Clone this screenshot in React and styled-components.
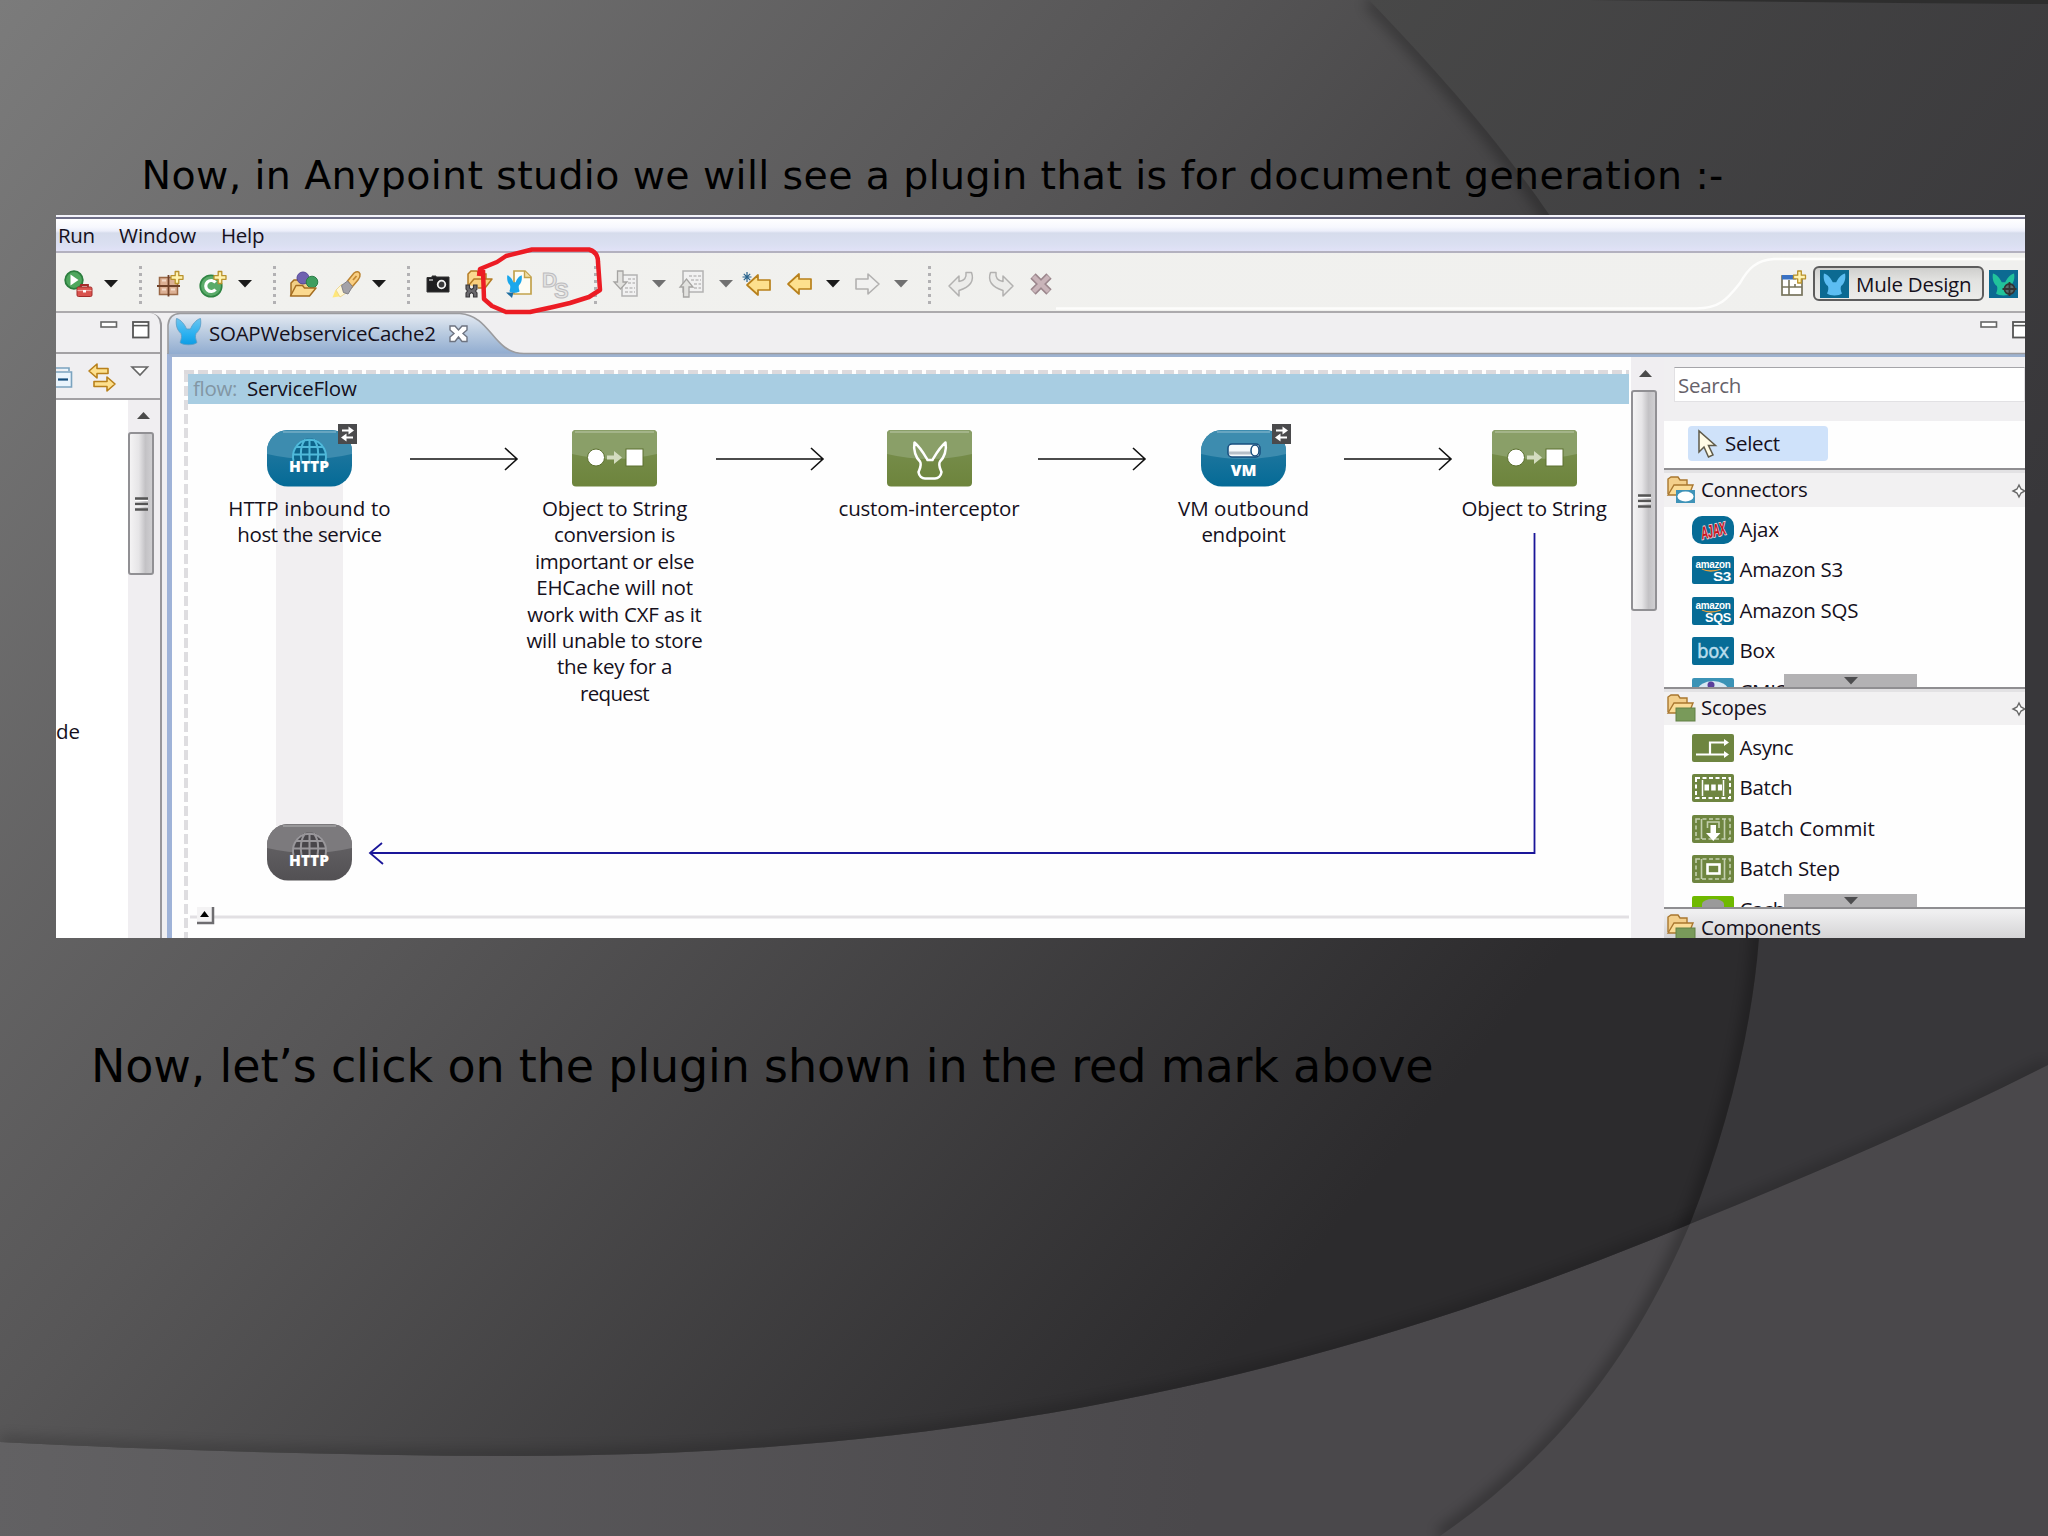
import React from 'react';
import styled, { createGlobalStyle } from 'styled-components';

const Global = createGlobalStyle`
  * { box-sizing: border-box; }
  html, body { margin: 0; padding: 0; background: #4a484b; }
  svg { display: block; overflow: visible; flex: none; }
`;

/* ---------- slide ---------- */
const Slide = styled.main`
  position: relative;
  width: 2048px;
  height: 1536px;
  overflow: hidden;
  display: flex;
  flex-direction: column;
  align-items: flex-start;
  font-family: "Open Sans", "Noto Sans", sans-serif;
  font-size: 20.5px;
  color: #15101c;
`;
const Backdrop = styled.svg`
  position: absolute;
  inset: 0;
`;
const Heading = styled.p`
  position: relative;
  margin: ${p => p.$top}px 0 0 ${p => p.$left}px;
  height: ${p => p.$h}px;
  line-height: 60px;
  font-family: "DejaVu Sans", sans-serif;
  font-size: ${p => p.$size}px;
  letter-spacing: ${p => p.$ls}px;
  white-space: nowrap;
  color: #000;
`;
const Window = styled.section`
  position: relative;
  margin-left: 56px;
  width: 1969px;
  height: 723px;
  display: flex;
  flex-direction: column;
  background: #f0eff1;
`;

/* ---------- menu and toolbar ---------- */
const MenuBar = styled.nav`
  height: 38px;
  padding: 2px 0 0 2px;
  display: flex;
  border-top: 2px solid #f4f4fb;
  border-bottom: 2px solid #b3b1bf;
  background: linear-gradient(#6f6f88 0 2px, #fff 2px, #f7f8fe 10px, #eceefa 14px, #d6dcec 16px, #dadff1 27px, #e1e2f7 34px);
`;
const MenuItem = styled.span`
  width: ${p => p.$w}px;
  line-height: 33px;
  letter-spacing: ${p => p.$ls}px;
  white-space: nowrap;
`;
const Toolbar = styled.div`
  position: relative;
  height: 60px;
  padding-top: 13px;
  display: flex;
  align-items: flex-start;
  border-bottom: 2px solid #acaaad;
  background: linear-gradient(90deg, #f1f1ee, #f0f0ee);
`;
const Tool = styled.span`
  width: ${p => p.$w || 28}px;
  margin-left: ${p => p.$l}px;
  height: 36px;
  display: flex;
  align-items: center;
  flex: none;
`;
const PinSlot = styled.span`
  width: 12px;
  margin: 9px 0 0 5px;
`;
const Dots = styled.span`
  width: 3px;
  height: 38px;
  margin-left: ${p => p.$l}px;
  flex: none;
  background: repeating-linear-gradient(#b2b1b3 0 3px, transparent 3px 7px);
`;
const PerspectiveEdge = styled.svg`
  position: absolute;
  left: 1000px;
  top: 0;
`;
const PerspectiveButton = styled.button`
  position: relative;
  margin-left: 6px;
  width: 171px;
  height: 35px;
  padding: 0 0 0 5px;
  display: flex;
  align-items: center;
  gap: 7px;
  border: 2px solid #5d5d5d;
  border-radius: 6px;
  background: linear-gradient(#cfcfcd, #e2e2e0 40%, #ececea);
  font: inherit;
  color: inherit;
  line-height: 30px;
  letter-spacing: ${p => p.$ls}px;
  white-space: nowrap;
`;
const RedMark = styled.svg`
  position: absolute;
  left: 0;
  top: 0;
  pointer-events: none;
`;

/* ---------- body ---------- */
const Body = styled.div`
  flex: 1;
  min-height: 0;
  display: flex;
`;
const SidePane = styled.aside`
  width: 106px;
  display: flex;
  flex-direction: column;
  border-right: 2px solid #97969a;
  border-top-right-radius: 12px;
`;
const SideHead = styled.div`
  height: 41px;
  padding: 8px 0 0 44px;
  display: flex;
  align-items: flex-start;
  gap: 14px;
  border-bottom: 2px solid #a3a1a4;
`;
const SideTools = styled.div`
  height: 46px;
  padding-top: 6px;
  display: flex;
  align-items: flex-start;
  border-bottom: 2px solid #a3a1a4;
`;
const SideBody = styled.div`
  flex: 1;
  display: flex;
  background: #fff;
`;
const SideText = styled.div`
  width: 72px;
  padding: 316px 0 0 0;
  line-height: 30px;
`;
const Track = styled.div`
  width: ${p => p.$w}px;
  padding-top: ${p => p.$top}px;
  display: flex;
  flex-direction: column;
  align-items: flex-start;
  background: #f0eef1;
`;
const Thumb = styled.div`
  margin-top: ${p => p.$gap}px;
  width: ${p => p.$w || 26}px;
  height: ${p => p.$h}px;
  display: flex;
  align-items: center;
  justify-content: center;
  border: 2px solid #919094;
  border-radius: 3px;
  background: linear-gradient(90deg, #f4f3f4, #e6e5e7 40%, #c3c2c5 70%, #cfced1);
`;
const Editor = styled.section`
  margin-left: 5px;
  flex: 1;
  min-width: 0;
  display: flex;
  flex-direction: column;
`;
const TabRow = styled.div`
  position: relative;
  height: 40px;
  display: flex;
  justify-content: space-between;
`;
const TabShape = styled.svg`
  position: absolute;
  left: 0;
  top: 0;
`;
const Tab = styled.div`
  position: relative;
  width: 340px;
  padding: 5px 0 0 9px;
  display: flex;
  align-items: flex-start;
`;
const TabTitle = styled.span`
  width: 240px;
  margin-left: 8px;
  line-height: 31px;
  letter-spacing: ${p => p.$ls}px;
  white-space: nowrap;
`;
const TabClose = styled.span`
  margin-top: 7px;
`;
const TabControls = styled.div`
  width: 45px;
  padding-top: 8px;
  display: flex;
  gap: 14px;
  overflow: hidden;
  align-items: flex-start;
`;
const EditorBody = styled.div`
  flex: 1;
  min-height: 0;
  display: flex;
  border-left: 5px solid #9fb3d8;
  border-top: 4px solid #9db2d0;
`;

/* ---------- flow canvas ---------- */
const Canvas = styled.div`
  position: relative;
  width: 1459px;
  padding: 17px 2px 0 16px;
  background: #fefefe;
`;
const FlowTitle = styled.div`
  height: 30px;
  padding-left: 5px;
  display: flex;
  gap: 9px;
  line-height: 29px;
  background: #a8cde2;
  white-space: nowrap;
`;
const FlowKind = styled.span`
  width: 45px;
  color: #8296a4;
  letter-spacing: ${p => p.$ls}px;
`;
const FlowName = styled.span`
  letter-spacing: ${p => p.$ls}px;
`;
const Wires = styled.svg`
  position: absolute;
  left: 0;
  top: 0;
`;
const Node = styled.div`
  position: absolute;
  left: ${p => p.$cx - 172 - 110}px;
  top: ${p => p.$y - 357}px;
  width: 220px;
  display: flex;
  flex-direction: column;
  align-items: center;
`;
const NodeText = styled.div`
  margin-top: 8px;
  display: flex;
  flex-direction: column;
  align-items: center;
  line-height: 26.4px;
  white-space: nowrap;
`;
const NodeLine = styled.span`
  letter-spacing: ${p => p.$ls}px;
`;

/* ---------- palette ---------- */
const Palette = styled.aside`
  width: 361px;
  display: flex;
  flex-direction: column;
  overflow: hidden;
  background: #fefefe;
`;
const SearchArea = styled.div`
  height: 64px;
  padding: 10px 0 0 10px;
  background: #f0eff1;
`;
const SearchField = styled.div`
  height: 35px;
  padding-left: 3px;
  line-height: 35px;
  border: 1px solid #e2e1e4;
  border-top-color: #a5a5a9;
  background: #fff;
  color: #66626a;
  letter-spacing: -0.3px;
`;
const SelectRow = styled.div`
  height: 47px;
  padding: 5px 0 0 24px;
`;
const SelectTool = styled.div`
  width: 140px;
  height: 35px;
  padding-left: 10px;
  display: flex;
  align-items: center;
  gap: 7px;
  border-radius: 4px;
  background: #cfe2fa;
  line-height: 33px;
  letter-spacing: -0.3px;
`;
const Drawer = styled.section`
  position: relative;
  height: ${p => p.$h}px;
  overflow: hidden;
  border-top: 2px solid #8f8e91;
`;
const DrawerHead = styled.header`
  height: ${p => p.$h}px;
  padding: ${p => p.$pt}px 0 0 3px;
  display: flex;
  align-items: flex-start;
  border-top: 3px solid ${p => p.$plain ? '#efeff0' : '#e3e2e4'};
  background: ${p => p.$plain ? 'linear-gradient(#efeff0, #d3d2d4)' : '#f2f1f2'};
`;
const DrawerName = styled.span`
  width: 308px;
  margin-left: 5px;
  line-height: 27px;
  letter-spacing: ${p => p.$ls}px;
`;
const Entry = styled.div`
  height: 40.4px;
  padding: 9px 0 0 28px;
  display: flex;
  align-items: flex-start;
  gap: 5.5px;
  line-height: 27px;
  letter-spacing: ${p => p.$ls}px;
  white-space: nowrap;
`;
const More = styled.div`
  position: absolute;
  left: 120px;
  bottom: 0;
  width: 133px;
  height: 13px;
  display: flex;
  align-items: center;
  justify-content: center;
  background: #b3b2b4;
`;

/* ---------- drawings ---------- */
const Drop = ({ c = '#1a1a1a' }) => (
  <svg width="14" height="8"><path d="M0 0H14L7 7.5Z" fill={c} /></svg>
);
const Grip = () => (
  <svg width="13" height="14"><path d="M0 1.5H13M0 7H13M0 12.5H13" stroke="#555" strokeWidth="2.4" /><path d="M0 3.5H13M0 9H13" stroke="#fff" strokeWidth="1.2" /></svg>
);
const MinIcon = () => <svg width="18" height="8"><rect x="1" y="1" width="15.5" height="5" fill="#fff" stroke="#666" strokeWidth="1.6" /></svg>;
const MaxIcon = () => <svg width="18" height="18"><rect x="1" y="1" width="15.5" height="15.5" fill="#fff" stroke="#555" strokeWidth="1.8" /><path d="M1 4.6H16.5" stroke="#555" strokeWidth="1.6" /></svg>;
const Plus = ({ x, y }) => (
  <path transform={`translate(${x} ${y})`} d="M-1.800 -6H1.800V-1.800H6V1.800H1.800V6H-1.800V1.800H-6V-1.800H-1.800Z" fill="#fff3b0" stroke="#b9922c" strokeWidth="1.300" strokeLinejoin="round" />
);
const MULE = 'M0.5 0.500C5 1.500 9 7 10.500 11H14.500C16 7 20 1.500 24.500 0.500C25.500 7 24 12 20 15.500C19 18 19.500 21 21 24.500C18 27.500 7 27.500 4 24.500C5.500 21 6 18 5 15.500C1 12 -0.500 7 0.500 0.500Z';
const MuleHead = ({ w = 25, h = 27 }) => (
  <svg width={w} height={h} viewBox="0 0 25 27">
    <defs><linearGradient id="mh" x2="0" y2="1"><stop stopColor="#6cc4ee" /><stop offset=".6" stopColor="#2ab0f0" /><stop offset="1" stopColor="#0d9ce4" /></linearGradient></defs>
    <path d={MULE} fill="url(#mh)" stroke="#5b9cc4" strokeWidth=".8" />
  </svg>
);
const RunExt = () => (
  <svg width="29" height="28">
    <circle cx="10" cy="10" r="8.800" fill="#4fa75e" stroke="#2b7d3e" strokeWidth="1.800" />
    <path d="M6.5 4.5L14.500 10L6.5 15.5Z" fill="#fff" />
    <path d="M17 17V15H24V17" fill="none" stroke="#a42b2b" strokeWidth="1.800" />
    <rect x="13" y="17" width="15" height="9.5" rx="1.5" fill="#d9534e" stroke="#a32c2a" />
    <path d="M13.5 20.500H27.5" stroke="#f0a9a3" strokeWidth="1.200" /><rect x="19" y="20" width="3" height="2.500" fill="#fff" />
  </svg>
);
const NewPackage = () => (
  <svg width="27" height="26">
    <rect x="2.5" y="6.5" width="18" height="17" fill="#dcb094" stroke="#9a6846" strokeWidth="1.5" />
    <path d="M11.5 4V25.500M0 15H23" stroke="#6f4229" strokeWidth="1.800" /><path d="M5 9.500H9M5 18.500H9M14 18.500H18" stroke="#f3dac8" strokeWidth="2" />
    <Plus x="20" y="6.5" />
  </svg>
);
const NewClass = () => (
  <svg width="28" height="27">
    <circle cx="12" cy="15" r="10.800" fill="#5aab69" stroke="#2f8443" strokeWidth="1.600" />
    <path d="M16.500 11.5A5.500 5.500 0 1 0 16.500 18.500" fill="none" stroke="#fff" strokeWidth="3.200" />
    <Plus x="21" y="6.5" />
  </svg>
);
const OpenType = () => (
  <svg width="30" height="27">
    <path d="M2 25V12L5 9H10L12 12H20V16" fill="#f2cf86" stroke="#a56d20" strokeWidth="1.5" />
    <circle cx="14" cy="7" r="6" fill="#6f62b0" stroke="#55489a" /><circle cx="23" cy="11" r="5.800" fill="#3f9e5f" stroke="#2b7d47" />
    <path d="M1.500 25L7 14.500H13.500L15.500 17H27L20.500 25Z" fill="#fbd98f" stroke="#a56d20" strokeWidth="1.5" strokeLinejoin="round" />
  </svg>
);
const Torch = () => (
  <svg width="30" height="27">
    <path d="M0.500 26.500L3.500 19L10 25Z" fill="#ffe779" />
    <path d="M4 19L10 13L14 22L8 26Z" fill="#fff7d6" stroke="#e9cf80" strokeWidth=".8" />
    <path d="M15.500 10L22 2Q26.500 -1 28 3Q28.500 6 26 9L20 16Z" fill="#f9cf83" stroke="#bb8330" strokeWidth="1.500" />
    <path d="M9.500 14.500L15.500 10L20.500 15.500L16 23L11.500 21.500Z" fill="#a3a2a8" stroke="#828187" />
    <path d="M21 9L24.500 5" stroke="#c48a35" strokeWidth="1.800" />
  </svg>
);
const Camera = () => (
  <svg width="24" height="18">
    <path d="M1 2.500H6V1H10V2H23V17H1Z" fill="#1f1f21" stroke="#333" /><circle cx="15.500" cy="9.500" r="3.800" fill="#3a3a3c" stroke="#f2f2f2" strokeWidth="1.800" />
    <path d="M3 5H7" stroke="#bbb" strokeWidth="1.500" />
  </svg>
);
const FolderFind = () => (
  <svg width="28" height="28">
    <path d="M3 15V4L6 1H12L14 4H21V9" fill="#fbd98f" stroke="#b47b25" strokeWidth="1.5" />
    <path d="M4 15L9 9H27L20 18H13" fill="#f9cf7c" stroke="#b47b25" strokeWidth="1.5" strokeLinejoin="round" />
    <path d="M1 15H4.500V18L6.500 19.500L8.500 18V15H12V19L10.500 21L12 23V27H8.500V24L6.500 22.500L4.500 24V27H1V23L2.500 21L1 19Z" fill="#6a696d" stroke="#39383b" strokeWidth="1.100" />
  </svg>
);
const MuleDoc = () => (
  <svg width="27" height="28">
    <path d="M8 1H19L25 7V24H8Z" fill="#fdfcf4" stroke="#c2a24c" strokeWidth="1.7" /><path d="M18.500 1V7.500H25" fill="#f2dfa5" stroke="#c2a24c" strokeWidth="1.400" />
    <path transform="translate(1 5) scale(.6 .66)" d={MULE} fill="#1aa7ec" />
    <path d="M0 22.500H7.500L6 28Z" fill="#1d6da0" />
  </svg>
);
const ds = { fontFamily: '"Liberation Sans", sans-serif', fontWeight: 700, fill: '#e4e4e4', stroke: '#bdbcbe', strokeWidth: 1 };
const DSIcon = () => (
  <svg width="28" height="28"><text x="-1" y="16.500" fontSize="21" {...ds}>D</text><text x="11" y="27.500" fontSize="22" {...ds}>S</text></svg>
);
const DocArrow = ({ up }) => (
  <svg width="26" height="28">
    <rect x={up ? 4 : 9} y={up ? 1 : 5} width={up ? 20 : 15} height={up ? 21 : 21} fill="#f1f1f1" stroke="#b3b2b2" strokeWidth="1.5" />
    <path d={up ? 'M10 6H22M12 10H22M15 14H22M15 18H22' : 'M15 9H22M15 13H22M12 18H22M12 22H22'} stroke="#bdbcbc" strokeWidth="1.600" strokeDasharray="3 1.500" />
    {up ? <path d="M4.500 27V17H1L7.500 9L14 17H10V27Z" fill="#e2e2df" stroke="#a5a4a2" strokeWidth="1.300" />
      : <path d="M4.500 1H10V12H14L7.500 19L1 12H4.500Z" fill="#e2e2df" stroke="#a5a4a2" strokeWidth="1.300" />}
  </svg>
);
const GOLD = { fill: '#fde08e', stroke: '#b8801b' };
const Back = ({ star }) => (
  <svg width={star ? 29 : 26} height="24">
    <g transform={star ? 'translate(3 2)' : 'translate(0 1)'}><path d="M1 11L12 1V6H24V16H12V21Z" {...GOLD} strokeWidth="1.700" strokeLinejoin="round" /></g>
    {star && <path d="M4 0V10M-0.500 5H8.500M0.800 1.800L7.200 8.200M7.200 1.800L0.800 8.200" stroke="#29638c" strokeWidth="1.200" />}
  </svg>
);
const Fwd = () => <svg width="26" height="24"><path d="M24 12L13 2V7H1V17H13V22Z" fill="#f1f1f0" stroke="#b2b1b0" strokeWidth="1.600" strokeLinejoin="round" /></svg>;
const Turn = ({ flip }) => (
  <svg width="27" height="26"><path transform={flip ? 'translate(26 0) scale(-1 1)' : undefined} d="M1 15L11 5V10.500Q19 9.500 18 1.500H23.500Q28 14 11 19.500V25Z" fill="#ececea" stroke="#b2b1b0" strokeWidth="1.500" strokeLinejoin="round" /></svg>
);
const Cross = () => <svg width="24" height="24"><path d="M4 4L20 20M20 4L4 20" stroke="#9b868c" strokeWidth="7.500" /><path d="M4.500 4.500L19.500 19.500M19.500 4.500L4.500 19.500" stroke="#c9b4b9" strokeWidth="4.500" /></svg>;
const NewPerspective = () => (
  <svg width="26" height="26"><rect x="1" y="5" width="20" height="19" fill="#fff" stroke="#77745c" strokeWidth="1.700" /><rect x="1" y="4" width="14" height="4.500" fill="#3a72c4" /><path d="M8 9V24M1 16H21M14 13V16" stroke="#77745c" strokeWidth="1.600" /><Plus x="18.500" y="6" /></svg>
);
const MuleSquare = ({ green }) => (
  <svg width="29" height="28">
    <rect width="29" height="28" fill="#0c6a92" />
    <path transform="translate(3.500 3) scale(.88 .84)" d={MULE} fill={green ? '#21c39b' : '#5cbdf2'} />
    {green && <g fill="none" stroke="#333" strokeWidth="1.800"><circle cx="20.500" cy="19" r="5" fill="#5c6c6c" /><path d="M20.500 12V26M13.500 19H27.500" /></g>}
  </svg>
);
const Collapse = () => (
  <svg width="17" height="22"><path d="M-0 1H13V4M0 5H15.500V20H0" fill="#eaf4fc" stroke="#7ba3bf" strokeWidth="1.600" /><path d="M2 12.500H12" stroke="#144c7c" strokeWidth="2.200" /></svg>
);
const Swap = () => (
  <svg width="28" height="30"><path d="M1 8L9 1V5.500H20V10.500H9V15ZM27 21L19 14V18.500H6V23.500H19V28Z" {...GOLD} strokeWidth="1.600" strokeLinejoin="round" /></svg>
);
const CloseTab = () => (
  <svg width="20" height="18"><path d="M1 1H6L9.500 5L13 1H18V5L14 8.500L18 12V16.500H13L9.500 12L6 16.500H1V12L5 8.500L1 5Z" fill="#fff" stroke="#6d7380" strokeWidth="1.400" /></svg>
);

const Tile = ({ c, round, children }) => {
  const id = `tile${c[0].slice(1)}${round ? 'r' : ''}`;
  const r = round ? 21 : 4;
  return (
    <svg width="85" height="57" viewBox="0 0 85 57">
      <defs>
        <linearGradient id={id} x2="0" y2="1"><stop stopColor={c[1]} /><stop offset="1" stopColor={c[2]} /></linearGradient>
        <clipPath id={`${id}c`}><rect width="85" height="56.500" rx={r} /></clipPath>
      </defs>
      <g clipPath={`url(#${id}c)`}>
        <rect width="85" height="57" fill={`url(#${id})`} />
        <path d="M0 0H85V24Q42 34 0 24Z" fill={c[0]} />
        <path d={round ? 'M16 2H69' : 'M3 2H82'} stroke="#fff" strokeOpacity=".22" strokeWidth="2" />
      </g>
      {children}
    </svg>
  );
};
const BLUE = ['#3d8caf', '#2c7da3', '#046a96'];
const GREEN = ['#8a9f68', '#7b9152', '#6d843c'];
const GREY = ['#7c7a7d', '#6a686b', '#525053'];
const tag = { fontFamily: '"Open Sans", sans-serif', fontWeight: 800, fill: '#fff', textAnchor: 'middle' };
const Badge = () => (
  <g transform="translate(71 -6)"><rect width="19" height="20" fill="#4a4a4c" /><path d="M4 6.500H12M15 13.500H7" stroke="#fff" strokeWidth="2" /><path d="M10.500 2.500L16 6.500L10.500 10.500ZM8.500 9.500L3 13.500L8.500 17.500Z" fill="#fff" /></g>
);
const HttpTile = ({ grey }) => {
  const s = grey ? '#98969a' : '#4fb9da';
  return (
    <Tile c={grey ? GREY : BLUE} round>
      <path d="M26 31V25A16.500 16.500 0 0 1 59 25V31Z" fill={grey ? '#48464a' : '#0d648b'} />
      <path d="M26.500 31Q25 24 28 18.500A16.500 16.500 0 0 1 57 18.500Q60 24 58.500 31M42.500 9V31M34.500 31Q32 18 38 9.500M50.500 31Q53 18 47 9.500M29 17H56M26 24.500H59" fill="none" stroke={s} strokeWidth="2" />
      <text x="42" y="42" fontSize="15" textLength="40" lengthAdjust="spacingAndGlyphs" {...tag}>HTTP</text>
      {!grey && <Badge />}
    </Tile>
  );
};
const VmTile = () => (
  <Tile c={BLUE} round>
    <rect x="27" y="14" width="32" height="13" rx="4" fill="#f6fafc" stroke="#164d7d" strokeWidth="1.500" />
    <path d="M28 23H51" stroke="#b6bfc8" strokeWidth="3" /><ellipse cx="54" cy="20.500" rx="4" ry="5.500" fill="#fff" stroke="#164d7d" strokeWidth="1.500" />
    <text x="42.500" y="46" fontSize="15.500" {...tag}>VM</text>
    <Badge />
  </Tile>
);
const ObjectTile = () => (
  <Tile c={GREEN}>
    <circle cx="24" cy="27.500" r="8.500" fill="#fff" stroke="#5c7130" /><rect x="54" y="19" width="17" height="17" fill="#fff" stroke="#5c7130" />
    <path d="M35 25.500H42V21L50 27.500L42 34V29.500H35Z" fill="#d3dcbf" />
  </Tile>
);
const InterceptorTile = () => (
  <Tile c={GREEN}>
    <path d="M27.500 12.500C26 20 29 28 33 31.500C35 35 33 38 31.500 42C32 46 35 48.500 38 48.500H48C51 48.500 54 46 54.500 42C53 38 51 35 53 31.500C57 28 60 20 58.500 12.500C52 18 48.500 25 45.500 30H40.500C37.500 25 34 18 27.500 12.500Z" fill="none" stroke="#fff" strokeWidth="2.500" strokeLinejoin="round" />
  </Tile>
);

const Folder = ({ kind }) => (
  <svg width="29" height="28">
    <path d="M1 18V3L4 1H11L13 4H20V9" fill="#f3cf8b" stroke="#a9772f" strokeWidth="1.400" />
    <path d="M1 19L7 9H26L22 19Z" fill="#fbdc97" stroke="#a9772f" strokeWidth="1.400" />
    {kind === 'cloud'
      ? <g><rect x="9" y="14" width="19" height="13" fill="#3f93b8" /><ellipse cx="18.500" cy="20.500" rx="8" ry="5" fill="#fff" /></g>
      : <rect x="9" y="14" width="19" height="13" fill="#799a5a" stroke="#628045" />}
  </svg>
);
const Pin = () => <svg width="12" height="12"><path d="M6 0L8 4L12 6L8 8L6 12L4 8L0 6L4 4Z" fill="#fff" stroke="#6a6a6a" strokeWidth="1.400" /></svg>;
const Cursor = () => <svg width="20" height="28"><path d="M1 1V22L6 17L10.500 27L15 25L10.500 15.500H17.500Z" fill="#fffbe6" stroke="#5f5a4a" strokeWidth="1.500" /></svg>;

const small = { fontFamily: '"Liberation Sans", sans-serif', fill: '#fff' };
const Amazon = ({ t, w }) => (
  <g><text x="21" y="11.500" fontSize="10" textLength="35" lengthAdjust="spacingAndGlyphs" textAnchor="middle" fontWeight="700" {...small}>amazon</text>
    <path d="M10 13Q18 17 29 13" fill="none" stroke="#e8a03c" strokeWidth="1.300" />
    <text x={39 - w} y="24.500" fontSize="13.500" textLength={w} lengthAdjust="spacingAndGlyphs" fontWeight="700" {...small}>{t}</text></g>
);
const ART = {
  ajax: <text x="21" y="21" fontSize="18" fontWeight="700" fontStyle="italic" textAnchor="middle" fontFamily='"Liberation Sans", sans-serif' fill="#c8151f" stroke="#f1d3d6" strokeWidth="1.800" paintOrder="stroke" transform="rotate(-12 21 14)" textLength="25" lengthAdjust="spacingAndGlyphs">AJAX</text>,
  s3: <Amazon t="S3" w={18} />,
  sqs: <Amazon t="SQS" w={26} />,
  box: <text x="21" y="20.500" fontSize="20" textLength="32" lengthAdjust="spacingAndGlyphs" textAnchor="middle" fontFamily='"DejaVu Sans", sans-serif' fill="#b9dcec" stroke="#b9dcec" strokeWidth=".4">box</text>,
  cmis: <g><ellipse cx="21" cy="12" rx="15" ry="9" fill="#d8e8f3" /><circle cx="19" cy="7" r="3.500" fill="#5a3f9c" /></g>,
  async: <g fill="none" stroke="#fff" strokeWidth="2.200"><path d="M4 20.500H33M18 20V8.500H33" /><path d="M32 5L37 8.500L32 12ZM32 17L37 20.500L32 24Z" fill="#fff" stroke="none" /></g>,
  batch: <g fill="none" stroke="#fff" strokeWidth="2"><rect x="4" y="4" width="34" height="20" strokeDasharray="4 2.500" /><path d="M10.500 6V22M31.500 6V22" strokeWidth="1.500" /><path d="M12.500 13.500H30" strokeWidth="6" strokeDasharray="4.500 2.200" /></g>,
  commit: <g fill="none" stroke="#c3cfae" strokeWidth="1.600"><rect x="4" y="4" width="34" height="20" strokeDasharray="4 2.500" /><path d="M9.500 4V24M32.500 4V24M15.500 13V7H27V13" /><path d="M18.500 10H24V18H28.500L21.300 26L14 18H18.500Z" fill="#fff" stroke="none" /></g>,
  step: <g fill="none" stroke="#c3cfae" strokeWidth="1.600"><rect x="4" y="4" width="34" height="20" strokeDasharray="4 2.500" /><path d="M9.500 4V24M32.500 4V24" /><rect x="15.500" y="9.500" width="12" height="9" stroke="#fff" strokeWidth="2.600" /></g>,
  cache: <g><ellipse cx="21" cy="8" rx="11" ry="5" fill="#9a9a9a" /><rect x="10" y="8" width="22" height="20" fill="#9a9a9a" /></g>,
};
const TINT = { async: '#6e8540', batch: '#6e8540', commit: '#6e8540', step: '#6e8540', cache: '#6fb900', cmis: '#3b93b6' };
const EntryIcon = ({ k }) => (
  <svg width="42" height="28"><rect width="42" height="28" rx={k === 'ajax' ? 10 : 2} fill={TINT[k] || '#076c96'} />{ART[k]}</svg>
);

/* ---------- data ---------- */
const LS = -0.3;
const NODES = [
  { cx: 309.5, art: <HttpTile />, lines: [['HTTP inbound to', 0.13], ['host the service', -0.38]] },
  { cx: 614.5, art: <ObjectTile />, lines: [['Object to String', -0.2], ['conversion is', LS], ['important or else', -0.36], ['EHCache will not', -0.14], ['work with CXF as it', -0.22], ['will unable to store', LS], ['the key for a', LS], ['request', -0.65]] },
  { cx: 929, art: <InterceptorTile />, lines: [['custom-interceptor', -0.18]] },
  { cx: 1243.5, art: <VmTile />, lines: [['VM outbound', 0.02], ['endpoint', LS]] },
  { cx: 1534, art: <ObjectTile />, lines: [['Object to String', -0.2]] },
];
const CONNECTORS = [['ajax', 'Ajax'], ['s3', 'Amazon S3'], ['sqs', 'Amazon SQS'], ['box', 'Box'], ['cmis', 'CMIS']];
const SCOPES = [['async', 'Async'], ['batch', 'Batch'], ['commit', 'Batch Commit', 0], ['step', 'Batch Step', -0.2], ['cache', 'Cache']];
const ARROWS = [410, 716, 1038, 1344];
const ARC = 'C1425 58 1495 135 1548 213C1690 430 1775 660 1759 938C1752 1030 1727 1130 1690 1224C1630 1365 1550 1460 1440 1536';

const Background = () => (
  <Backdrop width="2048" height="1536" viewBox="0 0 2048 1536">
    <defs>
      <linearGradient id="bgMain" gradientUnits="userSpaceOnUse" x1="0" y1="0" x2="1400" y2="1150"><stop stopColor="#7b7b7b" /><stop offset=".5" stopColor="#575657" /><stop offset="1" stopColor="#2c2b2d" /></linearGradient>
      <linearGradient id="bgRight" gradientUnits="userSpaceOnUse" x1="1365" y1="0" x2="2048" y2="500"><stop stopColor="#484848" /><stop offset="1" stopColor="#38373a" /></linearGradient>
      <linearGradient id="bgLow" gradientUnits="userSpaceOnUse" x1="0" y1="1440" x2="1200" y2="1536"><stop stopColor="#626163" /><stop offset="1" stopColor="#4a484b" /></linearGradient>
      <filter id="soft" x="-10%" y="-10%" width="120%" height="120%"><feGaussianBlur stdDeviation="7" /></filter>
      <clipPath id="inArc"><path d={`M0 0H1369${ARC}H0Z`} /></clipPath>
      <clipPath id="aboveWave"><path d="M0 0H2048V1065C1930 1125 1810 1175 1690 1224C1350 1365 1000 1455 520 1456C340 1456 160 1450 0 1442Z" /></clipPath>
    </defs>
    <rect width="2048" height="1536" fill="url(#bgLow)" />
    <g clipPath="url(#aboveWave)">
      <rect width="2048" height="1536" fill="url(#bgRight)" />
      <g clipPath="url(#inArc)"><rect width="2048" height="1536" fill="url(#bgMain)" /></g>
      <path d="M2048 1065C1930 1125 1810 1175 1690 1224C1350 1365 1000 1455 520 1456C340 1456 160 1450 0 1442" fill="none" stroke="#000" strokeOpacity=".22" strokeWidth="12" filter="url(#soft)" />
    </g>
    <g clipPath="url(#inArc)">
      <path d={`M1369 0${ARC}`} fill="none" stroke="#000" strokeOpacity=".3" strokeWidth="14" filter="url(#soft)" />
    </g>
    <path d="M1590 0H2048V4L1900 3Z" fill="#2e2e2e" />
  </Backdrop>
);

export default function App() {
  return (
    <>
      <Global />
      <Slide>
        <Background />
        <Heading $top={145} $left={141.5} $h={70} $size={39.5} $ls={0.37}>Now, in Anypoint studio we will see a plugin that is for document generation :-</Heading>
        <Window>
          <MenuBar>
            <MenuItem $w={61} $ls={LS}>Run</MenuItem>
            <MenuItem $w={102} $ls={-0.05}>Window</MenuItem>
            <MenuItem $w={60} $ls={LS}>Help</MenuItem>
          </MenuBar>
          <Toolbar>
            <PerspectiveEdge width="969" height="58"><path d="M0 55.500H640C665 55 672 45 684 30C692 16 700 7 718 6H969" fill="none" stroke="#fdfdfc" strokeWidth="2.500" /></PerspectiveEdge>
            <Tool $l={8}><RunExt /></Tool>
            <Tool $l={12} $w={14}><Drop /></Tool>
            <Dots $l={21} />
            <Tool $l={15}><NewPackage /></Tool>
            <Tool $l={14}><NewClass /></Tool>
            <Tool $l={11} $w={14}><Drop /></Tool>
            <Dots $l={21} />
            <Tool $l={13} $w={30}><OpenType /></Tool>
            <Tool $l={13} $w={30}><Torch /></Tool>
            <Tool $l={10} $w={14}><Drop /></Tool>
            <Dots $l={21} />
            <Tool $l={16}><Camera /></Tool>
            <Tool $l={11}><FolderFind /></Tool>
            <Tool $l={13}><MuleDoc /></Tool>
            <Tool $l={9}><DSIcon /></Tool>
            <Dots $l={23} />
            <Tool $l={16}><DocArrow /></Tool>
            <Tool $l={11} $w={14}><Drop c="#707070" /></Tool>
            <Tool $l={13}><DocArrow up /></Tool>
            <Tool $l={12} $w={14}><Drop c="#707070" /></Tool>
            <Tool $l={10} $w={30}><Back star /></Tool>
            <Tool $l={14}><Back /></Tool>
            <Tool $l={11} $w={14}><Drop /></Tool>
            <Tool $l={15}><Fwd /></Tool>
            <Tool $l={11} $w={14}><Drop c="#707070" /></Tool>
            <Dots $l={20} />
            <Tool $l={17}><Turn /></Tool>
            <Tool $l={12}><Turn flip /></Tool>
            <Tool $l={13}><Cross /></Tool>
            <Tool $l={724} $w={26}><NewPerspective /></Tool>
            <PerspectiveButton $ls={-0.25}><MuleSquare />Mule Design</PerspectiveButton>
            <Tool $l={5}><MuleSquare green /></Tool>
          </Toolbar>
          <Body>
            <SidePane>
              <SideHead><MinIcon /><MaxIcon /></SideHead>
              <SideTools>
                <Tool $w={17} $l={0}><Collapse /></Tool>
                <Tool $w={28} $l={15}><Swap /></Tool>
                <Tool $w={18} $l={15}><svg width="18" height="24"><path d="M1 1H16.500L9 9Z" fill="#fff" stroke="#666" strokeWidth="1.600" /></svg></Tool>
              </SideTools>
              <SideBody>
                <SideText>de</SideText>
                <Track $w={32} $top={12}>
                  <svg width="22" height="7"><path d="M9 7H22L15.500 0Z" fill="#4a4a4a" /></svg>
                  <Thumb $gap={13} $h={143}><Grip /></Thumb>
                </Track>
              </SideBody>
            </SidePane>
            <Editor>
              <TabRow>
                <TabShape width="1858" height="41">
                  <defs><linearGradient id="tab" x2="0" y2="1"><stop stopColor="#e6ebf3" /><stop offset=".45" stopColor="#bccde1" /><stop offset="1" stopColor="#91acd0" /></linearGradient></defs>
                  <path d="M1 41V12Q2 1 13 0.500H293C325 3 325 40 357 40.500Z" fill="url(#tab)" />
                  <path d="M1 41V12Q2 1 13 0.500H293C325 3 325 40 357 40.500H1858" fill="none" stroke="#9b9b9e" strokeWidth="1.600" />
                </TabShape>
                <Tab><MuleHead /><TabTitle $ls={-0.26}>SOAPWebserviceCache2</TabTitle><TabClose><CloseTab /></TabClose></Tab>
                <TabControls><MinIcon /><MaxIcon /></TabControls>
              </TabRow>
              <EditorBody>
                <Canvas>
                  <FlowTitle><FlowKind $ls={LS}>flow:</FlowKind><FlowName $ls={-0.2}>ServiceFlow</FlowName></FlowTitle>
                  <Wires width="1459" height="581" viewBox="172 357 1459 581">
                    <path d="M186 372V938" stroke="#dedde0" strokeWidth="4" strokeDasharray="10 4" />
                    <path d="M184 372H1629" stroke="#dcdadd" strokeWidth="4" strokeDasharray="10 4" />
                    <rect x="276" y="480" width="67" height="346" fill="#f1eff1" />
                    {ARROWS.map(x => <path key={x} d={`M${x} 459H${x + 107}M${x + 95} 448L${x + 107} 459L${x + 95} 470`} fill="none" stroke="#111" strokeWidth="1.600" />)}
                    <path d="M1534.500 533V853H370M382 843L370 853L383 864" fill="none" stroke="#1a1699" strokeWidth="1.800" />
                    <path d="M190 917H1629" stroke="#e2e0e3" strokeWidth="3" />
                    <rect x="197" y="907" width="16" height="16" fill="#f4f3f4" /><path d="M197 923H213V907" fill="none" stroke="#6e6d70" strokeWidth="2.500" /><path d="M200 917H209L204.500 911Z" fill="#000" />
                  </Wires>
                  {NODES.map(n => (
                    <Node key={n.cx} $cx={n.cx} $y={430}>
                      {n.art}
                      <NodeText>{n.lines.map(([t, ls]) => <NodeLine key={t} $ls={ls}>{t}</NodeLine>)}</NodeText>
                    </Node>
                  ))}
                  <Node $cx={309.5} $y={823.500}><HttpTile grey /></Node>
                </Canvas>
                <Track $w={33} $top={13}>
                  <svg width="22" height="7"><path d="M8 7H21L14.500 0Z" fill="#4a4a4a" /></svg>
                  <Thumb $gap={13} $h={221}><Grip /></Thumb>
                </Track>
                <Palette>
                  <SearchArea><SearchField>Search</SearchField></SearchArea>
                  <SelectRow><SelectTool><Cursor />Select</SelectTool></SelectRow>
                  <Drawer $h={219}>
                    <DrawerHead $h={37} $pt={3}><Folder kind="cloud" /><DrawerName $ls={LS}>Connectors</DrawerName><PinSlot><Pin /></PinSlot></DrawerHead>
                    {CONNECTORS.map(([k, t, ls = LS]) => <Entry key={k} $ls={ls}><EntryIcon k={k} />{t}</Entry>)}
                    <More><Drop c="#4d4d4f" /></More>
                  </Drawer>
                  <Drawer $h={220}>
                    <DrawerHead $h={36} $pt={1.5}><Folder /><DrawerName $ls={LS}>Scopes</DrawerName><PinSlot><Pin /></PinSlot></DrawerHead>
                    {SCOPES.map(([k, t, ls = LS]) => <Entry key={k} $ls={ls}><EntryIcon k={k} />{t}</Entry>)}
                    <More><Drop c="#4d4d4f" /></More>
                  </Drawer>
                  <Drawer $h={31}>
                    <DrawerHead $h={31} $pt={1.5} $plain><Folder /><DrawerName $ls={LS}>Components</DrawerName></DrawerHead>
                  </Drawer>
                </Palette>
              </EditorBody>
            </Editor>
          </Body>
          <RedMark width="1969" height="120" viewBox="56 215 1969 120">
            <path d="M479 276L480 269L497 262L506 256L532 249.500H589Q598 252 598 262L600 290L589 297L570 303L553 307L530 312H506L492 306L484 299L483 270" fill="none" stroke="#ec1c24" strokeWidth="4.500" strokeLinejoin="round" />
          </RedMark>
        </Window>
        <Heading $top={98} $left={91} $h={70} $size={46} $ls={-0.16}>Now, let’s click on the plugin shown in the red mark above</Heading>
      </Slide>
    </>
  );
}
